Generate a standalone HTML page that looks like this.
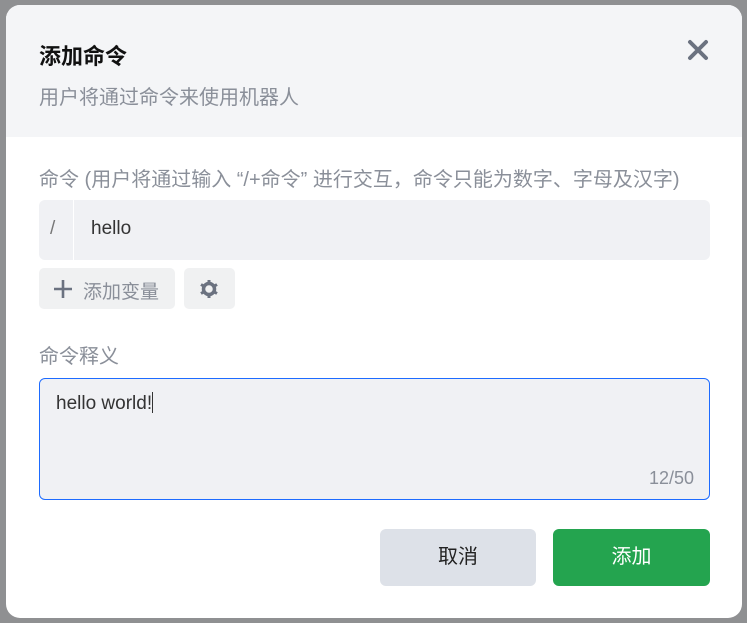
<!DOCTYPE html>
<html><head><meta charset="utf-8"><style>
*{box-sizing:border-box;margin:0;padding:0}
body{width:747px;height:623px;background:#8f9092;font-family:"Liberation Sans","Noto Sans CJK SC",sans-serif;position:relative;overflow:hidden}
.m{position:absolute;left:6px;top:5px;width:736px;height:613px;background:#fff;border-radius:14px;overflow:hidden}
.hd{position:absolute;left:0;top:0;width:100%;height:132px;background:#f4f5f7}
.a{position:absolute;white-space:nowrap}
</style></head><body>
<div class="m">
<div class="hd"></div>
<div class="a" style="left:33px;top:34px;font-size:22px;font-weight:bold;color:#111">添加命令</div>
<div class="a" style="left:33px;top:76px;font-size:20px;color:#8a8f99">用户将通过命令来使用机器人</div>
<svg class="a" style="left:680px;top:33px" width="24" height="24" viewBox="0 0 24 24"><path d="M4 4L20 20M20 4L4 20" stroke="#6b7280" stroke-width="4" stroke-linecap="round"/></svg>
<div class="a" style="left:33px;top:158px;font-size:20px;color:#8a8f99">命令 (用户将通过输入 “/+命令” 进行交互，命令只能为数字、字母及汉字)</div>
<div class="a" style="left:33px;top:195px;width:671px;height:60px;background:#f0f1f4;border-radius:6px"></div>
<div class="a" style="left:67px;top:195px;width:1px;height:60px;background:#fff"></div>
<div class="a" style="left:44px;top:213px;font-size:19px;color:#777">/</div>
<div class="a" style="left:85px;top:213px;font-size:19px;color:#333">hello</div>
<div class="a" style="left:33px;top:263px;width:136px;height:41px;background:#f0f1f2;border-radius:5px"></div>
<svg class="a" style="left:47px;top:274px" width="20" height="20"><path d="M10 1V19M1 10H19" stroke="#6b7280" stroke-width="2.6"/></svg>
<div class="a" style="left:77px;top:272px;font-size:19px;color:#8a8f99">添加变量</div>
<div class="a" style="left:178px;top:263px;width:51px;height:41px;background:#f0f1f2;border-radius:5px"></div>
<svg class="a" style="left:193px;top:274px" width="20" height="20" viewBox="0 0 20 20"><circle cx="10" cy="10" r="5.5" fill="none" stroke="#6b7280" stroke-width="3.5"/><path d="M10 1V4M10 16V19M2 5.5L4.6 7M15.4 13L18 14.5M2 14.5L4.6 13M15.4 7L18 5.5" stroke="#6b7280" stroke-width="3"/></svg>
<div class="a" style="left:33px;top:335px;font-size:20px;color:#8a8f99">命令释义</div>
<div class="a" style="left:33px;top:373px;width:671px;height:122px;background:#f0f1f4;border:1px solid #1d6bff;border-radius:6px"></div>
<div class="a" style="left:50px;top:387px;font-size:19px;color:#333">hello world!<span style="display:inline-block;width:1px;height:21px;background:#333;vertical-align:-4px"></span></div>
<div class="a" style="left:643px;top:463px;font-size:18px;color:#8a8f99">12/50</div>
<div class="a" style="left:374px;top:524px;width:156px;height:57px;background:#dde1e8;border-radius:6px;font-size:20px;color:#222;text-align:center;line-height:57px">取消</div>
<div class="a" style="left:547px;top:524px;width:157px;height:57px;background:#24a44f;border-radius:6px;font-size:20px;color:#fff;text-align:center;line-height:57px">添加</div>
</div>
</body></html>
